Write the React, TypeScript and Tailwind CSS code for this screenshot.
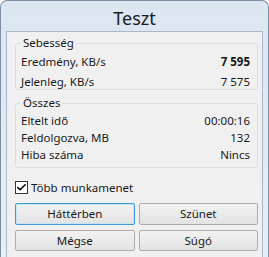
import { Check } from "lucide-react";

function Row({ label, value, bold }: { label: string; value: string; bold?: boolean }) {
  return (
    <div className="flex items-center justify-between">
      <span>{label}</span>
      <span className={bold ? "font-bold" : ""}>{value}</span>
    </div>
  );
}

function Group({ title, children, className }: { title: string; children: React.ReactNode; className?: string }) {
  return (
    <div className={`relative rounded-[3px] border border-[#d5dfe5] pl-[5px] pr-[7px] ${className ?? ""}`}>
      <span className="absolute left-[5px] top-[-9px] bg-[#f0f0f0] px-[2px] leading-[16px]">{title}</span>
      {children}
    </div>
  );
}

function Btn({ label, focused }: { label: string; focused?: boolean }) {
  return (
    <button
      type="button"
      className={`flex h-full flex-1 items-center justify-center rounded-[2px] border bg-gradient-to-b from-[#f2f2f2] to-[#e3e3e3] ${
        focused ? "border-[#3c9ad6] shadow-[inset_0_0_0_1px_#c4e5f6]" : "border-[#acacac]"
      }`}
    >
      {label}
    </button>
  );
}

export default function App() {
  return (
    <div
      className="flex h-[257px] w-[269px] flex-col overflow-hidden rounded-t-[7px] border border-b-0 border-[#7b8ea3] bg-gradient-to-b from-[#dbe6f1] to-[#e8eef5] text-[11.5px] text-[#1a1a1a]"
      style={{ fontFamily: '"Noto Sans", "Open Sans", sans-serif' }}
    >
      <div className="flex h-[30px] shrink-0 items-center justify-center pt-[4px] text-[18px] leading-none text-[#1b1b1b]">
        Teszt
      </div>
      <div className="mx-[5px] flex-1 border border-b-0 border-[#a9b8c8] bg-[#f0f0f0] pl-[8px] pr-[4px] pt-[11px]">
        <Group title="Sebesség" className="h-[47px] w-[243px] pt-[9px]">
          <div className="flex flex-col gap-[3px] leading-[17px]">
            <Row label="Eredmény, KB/s" value="7 595" bold />
            <Row label="Jelenleg, KB/s" value="7 575" />
          </div>
        </Group>
        <Group title="Összes" className="mt-[13px] h-[65px] w-[243px] pt-[8px]">
          <div className="flex flex-col leading-[17px]">
            <Row label="Eltelt idő" value="00:00:16" />
            <Row label="Feldolgozva, MB" value="132" />
            <Row label="Hiba száma" value="Nincs" />
          </div>
        </Group>
        <div className="mt-[13px] flex items-center gap-[3px]">
          <span className="flex h-[13px] w-[13px] items-center justify-center border border-[#333] bg-white">
            <Check size={11} strokeWidth={3.5} className="text-black" />
          </span>
          <span className="leading-[13px]">Több munkamenet</span>
        </div>
        <div className="mt-[9px] flex h-[22px] w-[243px] gap-[4px]">
          <Btn label="Háttérben" focused />
          <Btn label="Szünet" />
        </div>
        <div className="mt-[5px] flex h-[21px] w-[243px] gap-[4px]">
          <Btn label="Mégse" />
          <Btn label="Súgó" />
        </div>
      </div>
    </div>
  );
}
